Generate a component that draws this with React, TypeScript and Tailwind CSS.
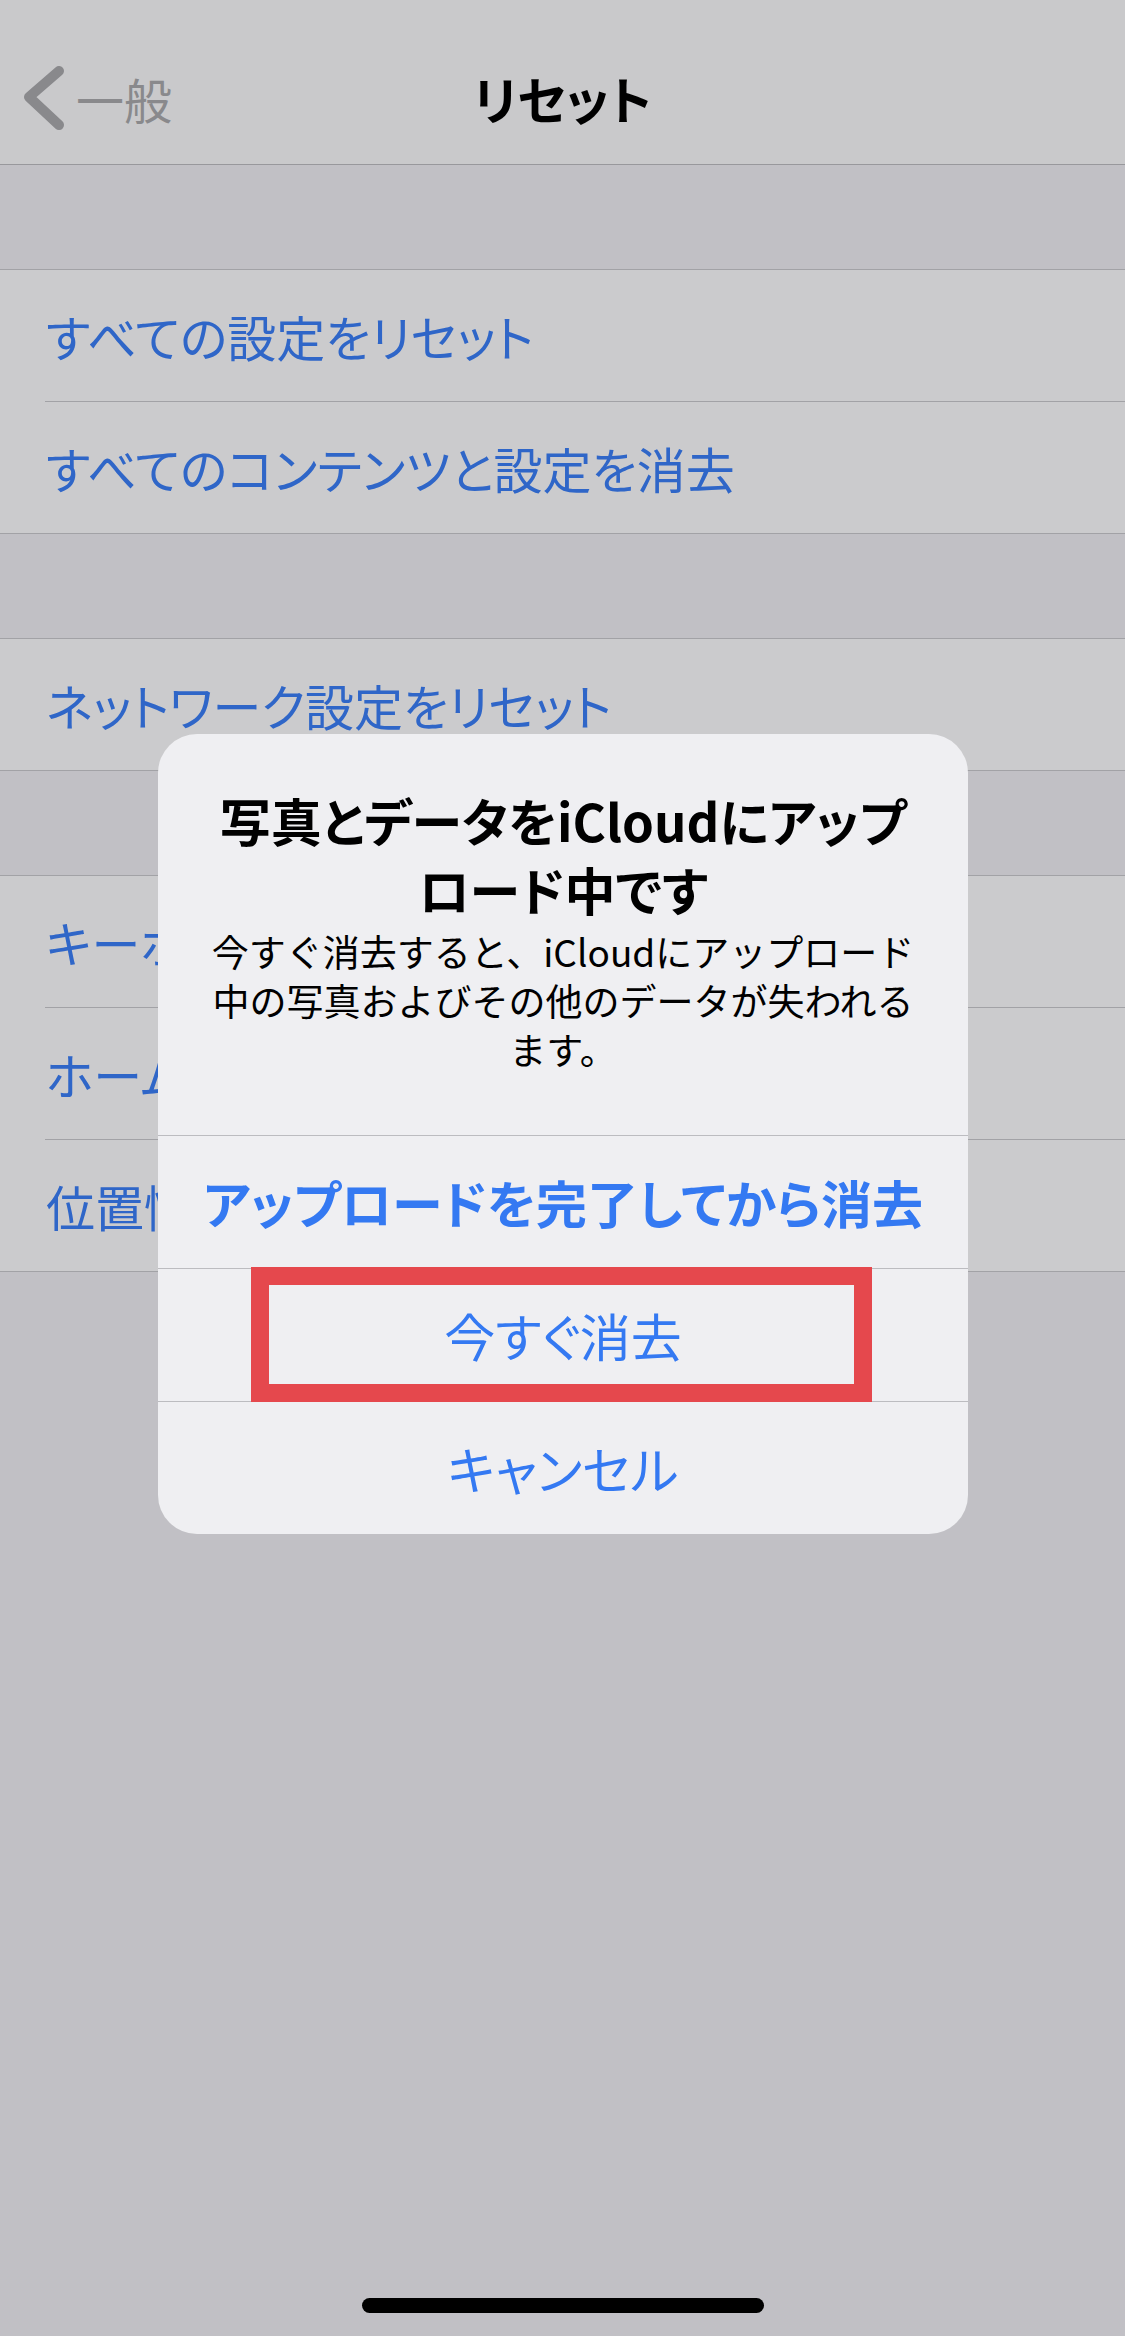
import React from 'react';

const rowText = "text-[49px] leading-none text-[#2f66c8] whitespace-nowrap [font-feature-settings:'palt']";

function Row({ label, last }: { label: string; last?: boolean }) {
  return (
    <div className="flex flex-col">
      <div className="h-[131px] flex items-center pl-[46px] bg-[#cbcbcd]">
        <span className={rowText}>{label}</span>
      </div>
      {!last && (
        <div className="h-px bg-[#cbcbcd] pl-[45px]">
          <div className="h-px bg-[#a2a2a6]" />
        </div>
      )}
    </div>
  );
}

function Group({ items }: { items: string[] }) {
  return (
    <div className="border-y border-[#a2a2a6]">
      {items.map((label, i) => (
        <Row key={label} label={label} last={i === items.length - 1} />
      ))}
    </div>
  );
}

export default function App() {
  return (
    <div className="relative w-[1125px] h-[2336px] bg-[#c1c0c5] overflow-hidden flex flex-col font-['Noto_Sans_CJK_JP','Noto_Sans',sans-serif]">
      {/* Nav bar */}
      <div className="h-[165px] pt-[32px] bg-[#c9c9cb] border-b border-[#98989c] shrink-0">
        <div className="h-[132px] grid grid-cols-[1fr_auto_1fr] items-center">
          <div className="flex items-center pl-[22px]">
            <svg width="44" height="64" viewBox="0 0 44 64" fill="none">
              <path d="M37 5 L7 31 L37 59" stroke="#89898c" strokeWidth="10" strokeLinecap="round" strokeLinejoin="round" />
            </svg>
            <span className="ml-[10px] text-[48px] leading-none text-[#89898c] [font-feature-settings:'palt']">一般</span>
          </div>
          <span className="text-[51px] leading-none font-bold text-black [font-feature-settings:'palt']">リセット</span>
          <div />
        </div>
      </div>

      <div className="h-[104px] shrink-0" />
      <Group items={['すべての設定をリセット', 'すべてのコンテンツと設定を消去']} />
      <div className="h-[104px] shrink-0" />
      <Group items={['ネットワーク設定をリセット']} />
      <div className="h-[104px] shrink-0" />
      <Group items={['キーボードの辞書をリセット', 'ホーム画面のレイアウトをリセット', '位置情報とプライバシーをリセット']} />

      <div className="flex-1" />
      <div className="mx-auto mb-[23px] w-[402px] h-[15px] rounded-full bg-black" />

      {/* Alert */}
      <div className="absolute left-[158px] top-[734px] w-[810px] rounded-[39px] bg-[#efeff2] overflow-hidden">
        <div className="h-[401px] pt-[52px] flex flex-col items-center text-center">
          <p className="text-[51px] leading-[69px] font-bold text-black whitespace-nowrap [font-feature-settings:'palt']">
            写真とデータをiCloudにアップ
            <br />
            ロード中です
          </p>
          <p className="mt-[3px] text-[37px] leading-[49px] text-black whitespace-nowrap">
            今すぐ消去すると、iCloudにアップロード
            <br />
            中の写真およびその他のデータが失われる
            <br />
            ます。
          </p>
        </div>
        <div className="h-px bg-[#bcbcc0]" />
        <div className="h-[132px] flex items-center justify-center">
          <span className="text-[51px] leading-none font-bold text-[#3479f2] whitespace-nowrap [font-feature-settings:'palt']">アップロードを完了してから消去</span>
        </div>
        <div className="h-px bg-[#bcbcc0]" />
        <div className="h-[132px] flex items-center justify-center">
          <span className="text-[51px] leading-none text-[#3479f2] whitespace-nowrap [font-feature-settings:'palt']">今すぐ消去</span>
        </div>
        <div className="h-px bg-[#bcbcc0]" />
        <div className="h-[132px] flex items-center justify-center">
          <span className="text-[51px] leading-none text-[#3479f2] whitespace-nowrap [font-feature-settings:'palt']">キャンセル</span>
        </div>

        {/* highlight box */}
        <div className="absolute left-[93px] top-[533px] w-[621px] h-[135px] border-[18px] border-[#e5484d]" />
      </div>
    </div>
  );
}
